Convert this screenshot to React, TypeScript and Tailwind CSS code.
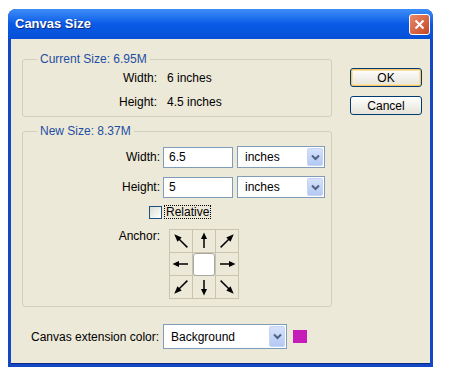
import React from "react";

// Arrow directions in degrees, row by row (null = centre cell)
const anchorArrows: (number | null)[] = [-45, 0, 45, -90, null, 90, -135, 180, 135];

function Arrow({ angle }: { angle: number }) {
  const diag = angle % 90 !== 0;
  return (
    <svg width="22" height="22" viewBox="0 0 22 22">
      <g transform={`rotate(${angle} 11 11)`}>
        <line x1="11" y1={diag ? 20 : 18} x2="11" y2="7" stroke="#000" strokeWidth="1.5" />
        <polygon points={diag ? "11,1.5 8,9 14,9" : "11,2.5 8,9 14,9"} fill="#000" />
      </g>
    </svg>
  );
}

function Chevron() {
  return (
    <svg width="9" height="7" viewBox="0 0 9 7">
      <polyline points="1,1.5 4.5,5 8,1.5" fill="none" stroke="#4d6185" strokeWidth="2" />
    </svg>
  );
}

function Select({ value, className }: { value: string; className: string }) {
  return (
    <div className={`flex items-stretch bg-white border border-[#7f9db9] p-px ${className}`}>
      <span className="flex-1 pl-[6px] flex items-center">{value}</span>
      <span className="w-[16px] flex items-center justify-center rounded-[2px] bg-gradient-to-b from-[#d6e2fb] to-[#b3c8f3] border border-[#c6d5f5]">
        <Chevron />
      </span>
    </div>
  );
}

function Button({ label, primary }: { label: string; primary?: boolean }) {
  return (
    <button
      className={`w-[72px] h-[19px] rounded-[3px] border border-[#003c74] bg-gradient-to-b from-white to-[#e6e3d8] text-[12px] leading-none ${
        primary ? "shadow-[inset_0_0_0_1px_#f6c76a,inset_0_0_0_2px_#fbe3a8]" : ""
      }`}
    >
      {label}
    </button>
  );
}

export default function App() {
  return (
    <div
      className="w-[450px] h-[370px] bg-white pl-[8px] pt-[9px] text-[12px] text-black"
      style={{ fontFamily: '"Liberation Sans", Arial, sans-serif' }}
    >
      <div className="w-[425px] h-[358px] flex flex-col rounded-t-[8px] overflow-hidden bg-[#1447c4]">
        {/* Title bar */}
        <div className="h-[30px] flex items-center justify-between pl-[7px] pr-[3px] bg-gradient-to-b from-[#3d8df7] via-[#0a5ae6] to-[#0650d6]">
          <span className="text-white font-bold text-[13px] [text-shadow:1px_1px_0_#0a2c80]">Canvas Size</span>
          <span className="w-[21px] h-[21px] rounded-[3px] border border-white bg-gradient-to-br from-[#e88a6c] to-[#c44422] flex items-center justify-center">
            <svg width="11" height="11" viewBox="0 0 11 11">
              <path d="M1.5 1.5 L9.5 9.5 M9.5 1.5 L1.5 9.5" stroke="#fff" strokeWidth="2" />
            </svg>
          </span>
        </div>

        {/* Body */}
        <div className="flex-1 mx-[3px] mb-[3px] bg-[#ece9d8] flex pl-[11px] pt-[13px] border-b border-[#0b2a80]">
          <div className="w-[310px] flex flex-col">
            <fieldset className="h-[65px] border border-[#d0d0bf] rounded-[3px]">
              <legend className="ml-[14px] px-[3px] text-[#1f4ea3] leading-[14px]">Current Size: 6.95M</legend>
              <div className="flex items-center h-[24px]">
                <span className="w-[134px] text-right">Width:</span>
                <span className="ml-[10px]">6 inches</span>
              </div>
              <div className="flex items-center h-[24px]">
                <span className="w-[134px] text-right">Height:</span>
                <span className="ml-[10px]">4.5 inches</span>
              </div>
            </fieldset>

            <fieldset className="mt-[7px] h-[183px] border border-[#d0d0bf] rounded-[3px]">
              <legend className="ml-[14px] px-[3px] text-[#1f4ea3] leading-[14px]">New Size: 8.37M</legend>
              <div className="flex flex-col gap-[8px] mt-[8px]">
                <div className="flex items-center h-[22px]">
                  <span className="w-[137px] text-right">Width:</span>
                  <div className="ml-[3px] w-[70px] h-[21px] border border-[#7f9db9] bg-white pl-[5px] flex items-center">6.5</div>
                  <Select value="inches" className="ml-[4px] w-[88px] h-[22px]" />
                </div>
                <div className="flex items-center h-[22px]">
                  <span className="w-[137px] text-right">Height:</span>
                  <div className="ml-[3px] w-[70px] h-[21px] border border-[#7f9db9] bg-white pl-[5px] flex items-center">5</div>
                  <Select value="inches" className="ml-[4px] w-[88px] h-[22px]" />
                </div>
              </div>
              <div className="flex items-center mt-[7px] ml-[126px]">
                <span className="w-[13px] h-[13px] border border-[#1c5180] bg-gradient-to-br from-[#dcdcd5] to-white" />
                <span className="ml-[2px] px-px border border-dotted border-black leading-[12px]">Relative</span>
              </div>
              <div className="flex mt-[10px]">
                <span className="w-[137px] text-right leading-[14px]">Anchor:</span>
                <div className="ml-[9px] grid grid-cols-3 border-l border-t border-[#c8c4b0]">
                  {anchorArrows.map((a, i) => (
                    <div
                      key={i}
                      className="w-[23px] h-[23px] border-r border-b border-[#c8c4b0] flex items-center justify-center"
                    >
                      {a === null ? (
                        <div className="w-[23px] h-[23px] bg-white rounded-[3px] border border-[#a8a8a0]" />
                      ) : (
                        <Arrow angle={a} />
                      )}
                    </div>
                  ))}
                </div>
              </div>
            </fieldset>

            <div className="flex items-center mt-[17px] pl-[9px]">
              <span className="w-[132px]">Canvas extension color:</span>
              <Select value="Background" className="w-[124px] h-[25px]" />
              <span className="ml-[6px] w-[14px] h-[13px] bg-[#c61cb8]" />
            </div>
          </div>

          <div className="ml-[18px] pt-[16px] flex flex-col gap-[9px]">
            <Button label="OK" primary />
            <Button label="Cancel" />
          </div>
        </div>
      </div>
    </div>
  );
}
